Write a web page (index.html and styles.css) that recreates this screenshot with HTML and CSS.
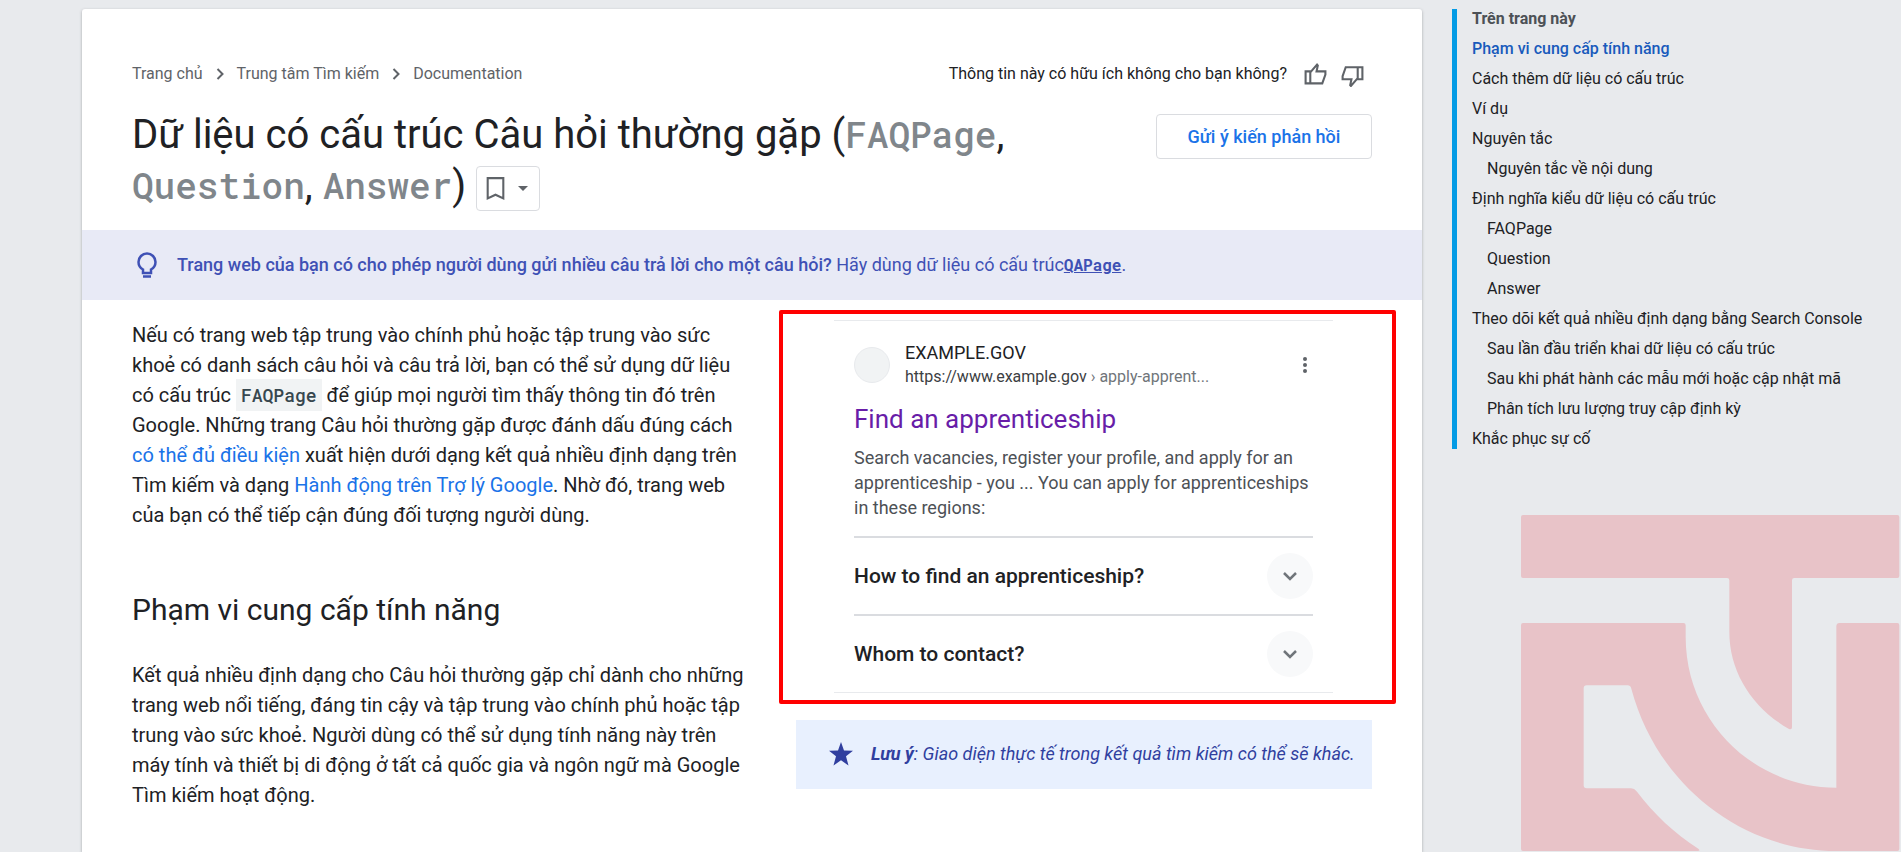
FILE: index.html
```html
<!DOCTYPE html>
<html lang="vi">
<head>
    <meta charset="UTF-8">
    <meta name="viewport" content="width=device-width, initial-scale=1.0">
    <title>Dữ liệu có cấu trúc Câu hỏi thường gặp</title>
    <link rel="stylesheet" href="styles.css">
</head>
<body>
    <div class="layout">
        <!-- Article -->
        <main class="article">
            <div class="top-row">
                <nav class="breadcrumb">
                    <a href="#">Trang chủ</a>
                    <svg class="crumb-arrow" viewBox="0 0 8 12"><path d="M1.5 1L6.5 6L1.5 11"/></svg>
                    <a href="#">Trung tâm Tìm kiếm</a>
                    <svg class="crumb-arrow" viewBox="0 0 8 12"><path d="M1.5 1L6.5 6L1.5 11"/></svg>
                    <a href="#">Documentation</a>
                </nav>
                <div class="rating">
                    <span>Thông tin này có hữu ích không cho bạn không?</span>
                    <button class="thumb" aria-label="Hữu ích">
                        <svg viewBox="0 0 24 24"><path d="M2.500 9H7V20.500H2.500ZM7 10L13.500 2.500L14.200 3.300L13 9H21.500V12L18.500 20.500H7Z"/></svg>
                    </button>
                    <button class="thumb" aria-label="Không hữu ích">
                        <svg viewBox="0 0 24 24"><path d="M21.500 16.500H17V5H21.500ZM17 15.500L10.500 23L9.800 22.200L11 16.500H2.500V13.500L5.500 5H17Z"/></svg>
                    </button>
                </div>
            </div>

            <header class="title-row">
                <h1>Dữ liệu có cấu trúc Câu hỏi thường gặp (<code>FAQPage</code>, <code>Question</code>, <code>Answer</code>)
                    <button class="bookmark" aria-label="Lưu trang">
                        <svg class="bookmark-icon" viewBox="0 0 20 24"><path d="M2.5 2H17.500V21.500L10 18L2.500 21.500Z"/></svg>
                        <svg class="caret" viewBox="0 0 10 5"><path d="M0 0H10L5 5Z"/></svg>
                    </button>
                </h1>
                <button class="feedback">Gửi ý kiến phản hồi</button>
            </header>

            <aside class="banner">
                <svg class="bulb" viewBox="0 0 20 26"><path d="M6 21V17.500C3.400 16 1.500 13 1.500 10A8.500 8.500 0 0 1 18.500 10C18.500 13 16.600 16 14 17.500V21ZM6 24.500H14"/></svg>
                <p><b>Trang web của bạn có cho phép người dùng gửi nhiều câu trả lời cho một câu hỏi?</b> Hãy dùng dữ liệu có cấu trúc<a href="#"><code>QAPage</code></a>.</p>
            </aside>

            <div class="content">
                <div class="text">
                    <p>Nếu có trang web tập trung vào chính phủ hoặc tập trung vào sức khoẻ có danh sách câu hỏi và câu trả lời, bạn có thể sử dụng dữ liệu có cấu trúc <code>FAQPage</code> để giúp mọi người tìm thấy thông tin đó trên Google. Những trang Câu hỏi thường gặp được đánh dấu đúng cách <a href="#">có thể đủ điều kiện</a> xuất hiện dưới dạng kết quả nhiều định dạng trên Tìm kiếm và dạng <a href="#">Hành động trên Trợ lý Google</a>. Nhờ đó, trang web của bạn có thể tiếp cận đúng đối tượng người dùng.</p>
                    <h2>Phạm vi cung cấp tính năng</h2>
                    <p>Kết quả nhiều định dạng cho Câu hỏi thường gặp chỉ dành cho những trang web nổi tiếng, đáng tin cậy và tập trung vào chính phủ hoặc tập trung vào sức khoẻ. Người dùng có thể sử dụng tính năng này trên máy tính và thiết bị di động ở tất cả quốc gia và ngôn ngữ mà Google Tìm kiếm hoạt động.</p>
                </div>

                <div class="side">
                    <!-- Search result preview -->
                    <figure class="preview">
                        <div class="result">
                            <div class="site">
                                <span class="favicon"></span>
                                <div class="site-text">
                                    <div class="site-name">EXAMPLE.GOV</div>
                                    <div class="site-url">https://www.example.gov <span>› apply-apprent...</span></div>
                                </div>
                                <svg class="dots" viewBox="0 0 6 20"><circle cx="3" cy="4" r="2"/><circle cx="3" cy="10" r="2"/><circle cx="3" cy="16" r="2"/></svg>
                            </div>
                            <h3>Find an apprenticeship</h3>
                            <p class="snippet">Search vacancies, register your profile, and apply for an apprenticeship - you ... You can apply for apprenticeships in these regions:</p>
                            <div class="question">
                                <span>How to find an apprenticeship?</span>
                                <button class="expand" aria-label="Expand"><svg viewBox="0 0 16 10"><path d="M2 2L8 8L14 2"/></svg></button>
                            </div>
                            <div class="question">
                                <span>Whom to contact?</span>
                                <button class="expand" aria-label="Expand"><svg viewBox="0 0 16 10"><path d="M2 2L8 8L14 2"/></svg></button>
                            </div>
                        </div>
                    </figure>
                    <aside class="note">
                        <svg class="star" viewBox="0 0 24 24"><path d="M12 0L15 8.500L24 8.700L17 14.300L19.500 23.500L12 18.300L4.500 23.500L7 14.300L0 8.700L9 8.500Z"/></svg>
                        <p><b>Lưu ý</b>: Giao diện thực tế trong kết quả tìm kiếm có thể sẽ khác.</p>
                    </aside>
                </div>
            </div>
        </main>

        <!-- Table of contents -->
        <nav class="toc">
            <ul>
                <li class="toc-title">Trên trang này</li>
                <li><a class="active" href="#">Phạm vi cung cấp tính năng</a></li>
                <li><a href="#">Cách thêm dữ liệu có cấu trúc</a></li>
                <li><a href="#">Ví dụ</a></li>
                <li><a href="#">Nguyên tắc</a></li>
                <li class="sub"><a href="#">Nguyên tắc về nội dung</a></li>
                <li><a href="#">Định nghĩa kiểu dữ liệu có cấu trúc</a></li>
                <li class="sub"><a href="#">FAQPage</a></li>
                <li class="sub"><a href="#">Question</a></li>
                <li class="sub"><a href="#">Answer</a></li>
                <li><a href="#">Theo dõi kết quả nhiều định dạng bằng Search Console</a></li>
                <li class="sub"><a href="#">Sau lần đầu triển khai dữ liệu có cấu trúc</a></li>
                <li class="sub"><a href="#">Sau khi phát hành các mẫu mới hoặc cập nhật mã</a></li>
                <li class="sub"><a href="#">Phân tích lưu lượng truy cập định kỳ</a></li>
                <li><a href="#">Khắc phục sự cố</a></li>
            </ul>
        </nav>
    </div>

    <!-- Watermark -->
    <svg class="watermark" viewBox="0 0 1200 1056">
        <path d="M66 45H1189Q1195 45 1195 51V228Q1195 234 1189 234H880Q873 234 873 241V682Q873 690 864 687C752 622 685 515 685 395V241Q685 234 678 234H66Q60 234 60 228V51Q60 45 66 45Z"/>
        <path d="M66 369H547Q554 369 554 376V410C554 662 756 862 1006 863V378Q1007 369 1015 369H1189Q1195 369 1195 376V1047Q1195 1053 1189 1053H1006C714 1052 466 848 391 566Q388 556 380 556H257Q248 556 248 565V856Q248 865 257 865H390Q400 865 408 875C459 942 520 1000 592 1046Q600 1053 590 1053H66Q60 1053 60 1047V376Q60 369 66 369Z"/>
    </svg>
</body>
</html>
```
FILE: styles.css
```css
/* Basic Reset */
* {
    margin: 0;
    padding: 0;
    box-sizing: border-box;
}

body {
    font-family: Roboto, "Noto Sans", sans-serif;
    font-size: 20px;
    line-height: 30px;
    color: #202124;
    background-color: #e8eaed;
}

a {
    color: #1a73e8;
    text-decoration: none;
}

button {
    font-family: inherit;
    background: none;
    border: none;
    cursor: pointer;
}

svg {
    display: block;
    flex: none;
}

code {
    font-family: "Roboto Mono", "DejaVu Sans Mono", monospace;
    font-weight: 500;
}

.layout {
    display: flex;
    gap: 30px;
    padding: 9px 0 0 82px;
}

/* Article */
.article {
    flex: 1;
    min-height: calc(100vh - 9px);
    background: #fff;
    border-radius: 3px 3px 0 0;
    box-shadow: 0 1px 3px rgba(60, 64, 67, 0.4);
}

.top-row {
    display: flex;
    justify-content: space-between;
    align-items: center;
    padding: 50px 50px 0;
    font-size: 16px;
}

.breadcrumb {
    display: flex;
    align-items: center;
    gap: 13px;
}

.breadcrumb a {
    color: #5f6368;
}

.crumb-arrow {
    width: 8px;
    height: 12px;
    fill: none;
    stroke: #5f6368;
    stroke-width: 2;
}

.rating {
    display: flex;
    align-items: center;
    gap: 12px;
    padding-right: 7px;
}

.rating span {
    margin-right: 4px;
}

.thumb svg {
    width: 25px;
    height: 25px;
    fill: none;
    stroke: #5f6368;
    stroke-width: 2;
}

.title-row {
    display: flex;
    align-items: flex-start;
    gap: 40px;
    padding: 20px 50px 19px;
}

h1 {
    flex: 1;
    font-size: 40px;
    font-weight: 400;
    line-height: 51px;
}

h1 code {
    font-size: 36px;
    color: #80868b;
}

.bookmark {
    display: inline-flex;
    align-items: center;
    justify-content: space-between;
    width: 64px;
    height: 45px;
    padding: 0 11px 0 8px;
    border: 1px solid #dadce0;
    border-radius: 4px;
    vertical-align: middle;
}

.bookmark-icon {
    width: 21px;
    height: 25px;
    fill: none;
    stroke: #5f6368;
    stroke-width: 2;
}

.caret {
    width: 10px;
    height: 5px;
    fill: #5f6368;
}

.feedback {
    width: 216px;
    height: 45px;
    margin-top: 5px;
    font-size: 18px;
    font-weight: 500;
    color: #1a73e8;
    border: 1px solid #dadce0;
    border-radius: 4px;
}

.banner {
    display: flex;
    align-items: center;
    gap: 20px;
    padding: 20px 55px;
    font-size: 18px;
    color: #3f51b5;
    background: #e8eaf6;
}

.banner b {
    font-weight: 500;
}

.banner a {
    color: inherit;
    text-decoration: underline;
}

.banner code {
    font-size: 16px;
    font-weight: 700;
}

.bulb {
    width: 20px;
    height: 26px;
    fill: none;
    stroke: #3f51b5;
    stroke-width: 2.5;
}

/* Article text and preview */
.content {
    display: flex;
    gap: 50px;
    padding: 20px 50px 40px;
}

.text {
    flex: 614;
}

.text code {
    padding: 4px 5px;
    font-size: 18px;
    color: #37474f;
    background: #f1f3f4;
}

h2 {
    margin: 60px 0 30px;
    font-size: 30px;
    font-weight: 400;
    line-height: 40px;
}

.side {
    flex: 576;
}

.preview {
    margin: -10px -24px 16px -17px;
    padding: 6px 59px 7px 51px;
    border: 4px solid #f00;
    border-radius: 2px;
}

.result {
    padding: 20px 20px 0;
    border-top: 1px solid #e8eaed;
    border-bottom: 1px solid #e8eaed;
}

.site {
    display: flex;
    align-items: center;
    padding-right: 5px;
}

.favicon {
    width: 36px;
    height: 36px;
    margin-right: 15px;
    border: 1px solid #e8eaed;
    border-radius: 50%;
    background: #f1f3f4;
}

.site-text {
    flex: 1;
    line-height: 24px;
}

.site-name {
    font-size: 18px;
}

.site-url {
    font-size: 16px;
    color: #3c4043;
}

.site-url span {
    color: #70757a;
}

.dots {
    width: 6px;
    height: 20px;
    fill: #5f6368;
}

h3 {
    margin: 12px 0 8px;
    font-size: 26px;
    font-weight: 400;
    line-height: 36px;
    color: #681da8;
}

.snippet {
    padding-bottom: 16px;
    font-size: 18px;
    line-height: 25px;
    color: #4d5156;
}

.question {
    display: flex;
    align-items: center;
    justify-content: space-between;
    height: 78px;
    border-top: 2px solid #dadce0;
    font-size: 21px;
    font-weight: 500;
}

.expand {
    display: flex;
    align-items: center;
    justify-content: center;
    width: 46px;
    height: 46px;
    border-radius: 50%;
    background: #f8f9fa;
}

.expand svg {
    width: 16px;
    height: 10px;
    fill: none;
    stroke: #70757a;
    stroke-width: 2.5;
}

.note {
    display: flex;
    align-items: center;
    gap: 18px;
    padding: 19px 10px 20px 33px;
    font-size: 18px;
    font-style: italic;
    color: #303f9f;
    background: #e8f0fe;
}

.star {
    width: 24px;
    height: 24px;
    fill: #303f9f;
}

/* Table of contents */
.toc {
    width: 449px;
}

.toc ul {
    padding-left: 15px;
    border-left: 5px solid #039be5;
    list-style: none;
    font-size: 16px;
    line-height: 20px;
}

.toc li + li {
    margin-top: 10px;
}

.toc a {
    color: #202124;
}

.toc .toc-title {
    font-weight: 700;
    color: #4d5156;
}

.toc .active {
    font-weight: 500;
    color: #185abc;
}

.toc .sub {
    padding-left: 15px;
}

.watermark {
    position: absolute;
    right: 0;
    bottom: 0;
    width: 400px;
    height: 352px;
    fill: #e8c3c8;
}
```
